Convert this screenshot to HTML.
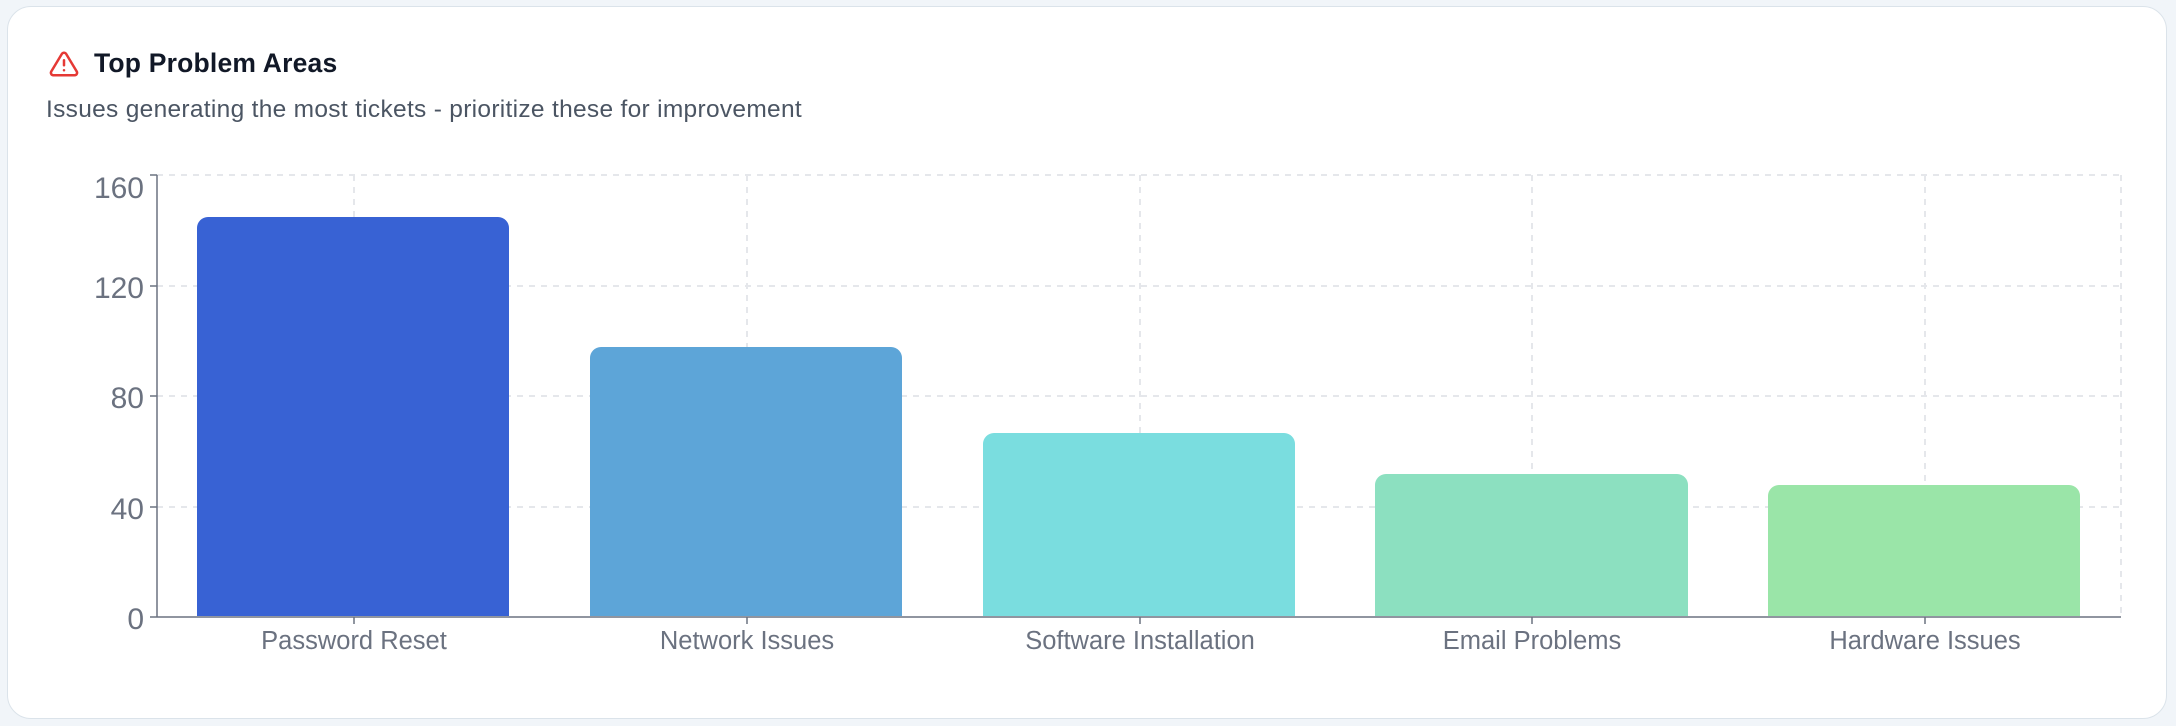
<!DOCTYPE html>
<html><head><meta charset="utf-8"><style>
html,body{margin:0;padding:0;background:#f1f5f9;width:2176px;height:726px;overflow:hidden;font-family:"Liberation Sans",sans-serif}
.card{position:absolute;left:7px;top:6px;width:2160px;height:713px;background:#fff;border:1.5px solid #dbe3ea;border-radius:24px;box-sizing:border-box}
.t{position:absolute;left:94px;top:48px;font-size:26.5px;font-weight:bold;color:#111827;letter-spacing:0.2px}
.s{position:absolute;left:46px;top:96px;font-size:24.5px;color:#4b5563;letter-spacing:0.3px}
</style></head><body>
<div class="card"></div>
<svg style="position:absolute;left:48px;top:49px" width="32" height="30" viewBox="0 0 24 24" fill="none" stroke="#e53935" stroke-width="2" stroke-linecap="round" stroke-linejoin="round"><path d="M10.3 3.9L1.8 18a2 2 0 0 0 1.7 3h17a2 2 0 0 0 1.7-3L13.7 3.9a2 2 0 0 0-3.4 0z"/><line x1="12" y1="9" x2="12" y2="13"/><line x1="12" y1="17" x2="12.01" y2="17"/></svg>
<div class="t">Top Problem Areas</div>
<div class="s">Issues generating the most tickets - prioritize these for improvement</div>
<svg style="position:absolute;left:0;top:0" width="2176" height="726">
<g stroke="#e5e7eb" stroke-width="2" stroke-dasharray="6 6">
<line x1="157" y1="175" x2="2121" y2="175"/><line x1="157" y1="286" x2="2121" y2="286"/><line x1="157" y1="396" x2="2121" y2="396"/><line x1="157" y1="507" x2="2121" y2="507"/>
<line x1="354" y1="175" x2="354" y2="616"/><line x1="747" y1="175" x2="747" y2="616"/><line x1="1140" y1="175" x2="1140" y2="616"/><line x1="1532" y1="175" x2="1532" y2="616"/><line x1="1925" y1="175" x2="1925" y2="616"/><line x1="2121" y1="175" x2="2121" y2="616"/>
</g>
<path d="M197 616V228a11 11 0 0 1 11-11h290a11 11 0 0 1 11 11V616z" fill="#3862d4"/>
<path d="M590 616V358a11 11 0 0 1 11-11h290a11 11 0 0 1 11 11V616z" fill="#5da5d8"/>
<path d="M983 616V444a11 11 0 0 1 11-11h290a11 11 0 0 1 11 11V616z" fill="#7adddf"/>
<path d="M1375 616V485a11 11 0 0 1 11-11h291a11 11 0 0 1 11 11V616z" fill="#8ce0c0"/>
<path d="M1768 616V496a11 11 0 0 1 11-11h290a11 11 0 0 1 11 11V616z" fill="#9ae5a8"/>
<g stroke="#6b7280" stroke-width="1.5">
<line x1="157" y1="175" x2="157" y2="617"/><line x1="157" y1="617" x2="2121" y2="617"/>
<line x1="150" y1="175" x2="157" y2="175"/><line x1="150" y1="286" x2="157" y2="286"/><line x1="150" y1="396" x2="157" y2="396"/><line x1="150" y1="507" x2="157" y2="507"/><line x1="150" y1="617" x2="157" y2="617"/>
<line x1="354" y1="617" x2="354" y2="624"/><line x1="747" y1="617" x2="747" y2="624"/><line x1="1140" y1="617" x2="1140" y2="624"/><line x1="1532" y1="617" x2="1532" y2="624"/><line x1="1925" y1="617" x2="1925" y2="624"/>
</g>
<g fill="#6b7280" font-family="Liberation Sans,sans-serif">
<g text-anchor="end" font-size="30"><text x="144" y="198">160</text><text x="144" y="298">120</text><text x="144" y="408">80</text><text x="144" y="519">40</text><text x="144" y="629">0</text></g>
<g text-anchor="middle" font-size="25.5"><text x="354" y="649">Password Reset</text><text x="747" y="649">Network Issues</text><text x="1140" y="649">Software Installation</text><text x="1532" y="649">Email Problems</text><text x="1925" y="649">Hardware Issues</text></g>
</g>
</svg>
</body></html>
